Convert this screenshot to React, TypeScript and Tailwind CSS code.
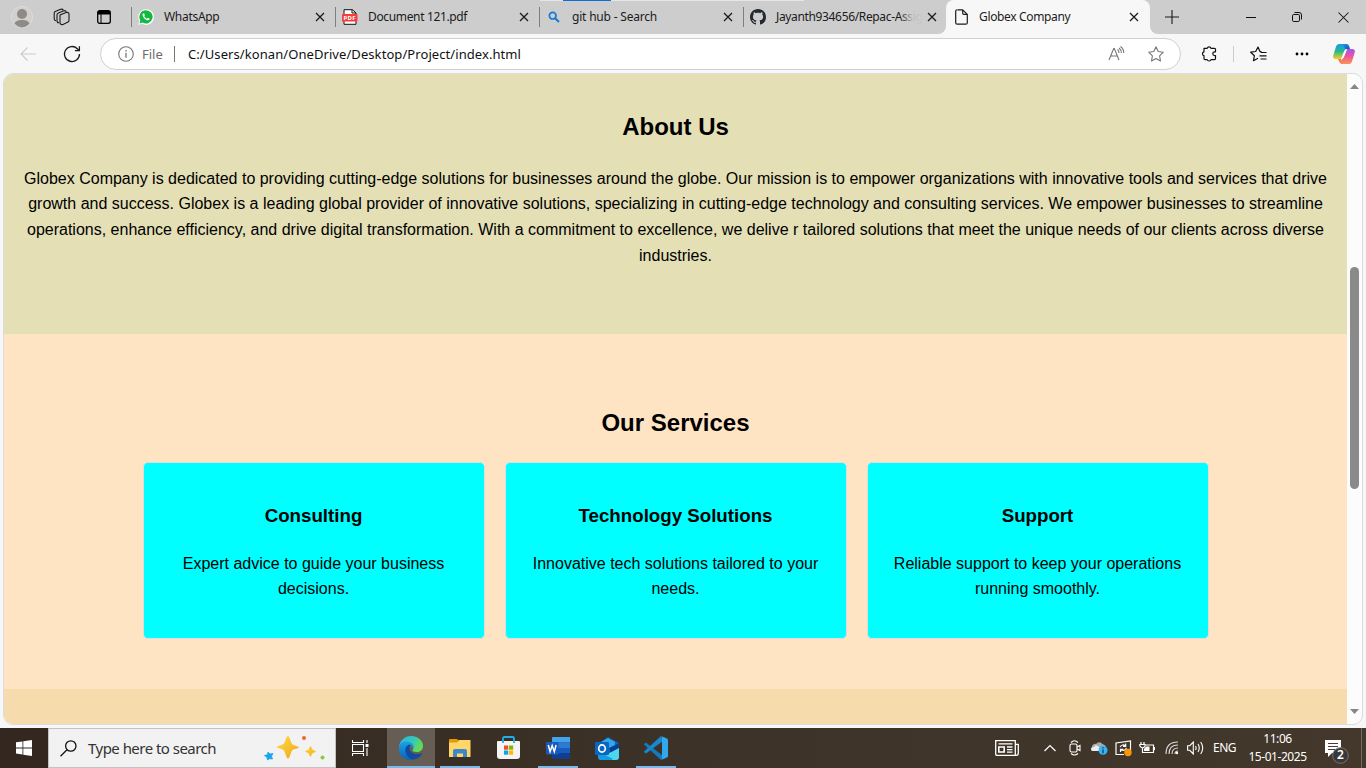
import React from "react";

type TabProps = { title: React.ReactNode; icon: React.ReactNode; active?: boolean; fade?: boolean };

const Close = ({ className = "" }: { className?: string }) => (
  <svg className={"shrink-0 " + className} width="10" height="10" viewBox="0 0 10 10" fill="none" stroke="#1b1b1b" strokeWidth="1.25">
    <path d="M1 1l8 8M9 1L1 9" />
  </svg>
);

function Tab({ title, icon, fade }: TabProps) {
  return (
    <div className="flex h-[34px] w-[204px] shrink-0 items-center">
      <div className="h-5 w-px bg-[#7d7d7d]" />
      <div className="ml-[6px] flex w-4 shrink-0 justify-center">{icon}</div>
      <div className="relative ml-[10px] w-[144px] whitespace-nowrap text-[12px] leading-[18px] text-[#1b1b1b]">
        {title}
        {fade && <div className="absolute inset-y-0 -right-1 w-6 bg-gradient-to-r from-[#cdcdcd00] via-[#cdcdcde0] to-[#cdcdcd]" />}
      </div>
      <Close className="ml-[7px]" />
    </div>
  );
}

const WhatsAppIcon = () => (
  <svg width="16" height="16" viewBox="0 0 16 16">
    <path d="M8 .2a7.800 7.800 0 0 0-6.800 11.500L.2 15.800l4.200-1A7.800 7.800 0 1 0 8 .2z" fill="#fff" />
    <path d="M8 1.300a6.600 6.600 0 0 0-5.700 10l-.8 3.100 3.200-.8A6.600 6.600 0 1 0 8 1.300z" fill="#12b93f" />
    <path d="M5.600 4.300c-.9.4-1.300 1.300-.9 2.500.7 2 2.300 3.700 4.400 4.400 1.200.4 2.300 0 2.500-1.100l-.1-.5-1.600-.8-.9.9C7.600 9.200 6.700 8.200 6.200 7.100l.7-.9-.7-1.800z" fill="#fff" />
  </svg>
);

const PdfIcon = () => (
  <svg width="16" height="16" viewBox="0 0 16 16">
    <path d="M2 .7h8.500L14 4v11.300H2z" fill="#fff" stroke="#111" strokeWidth="1" />
    <path d="M10 .7V4h4" fill="none" stroke="#111" />
    <rect x="0" y="5" width="15.500" height="7.500" rx=".7" fill="#f73d3d" />
    <text x="1.500" y="11" fontSize="6" fontWeight="700" fill="#fff" fontFamily="Open Sans, sans-serif" textLength="12">PDF</text>
  </svg>
);

const SearchIcon = () => (
  <svg width="12" height="12" viewBox="0 0 12 12" fill="none" stroke="#1878d4" strokeWidth="1.700">
    <circle cx="4.700" cy="4.700" r="3.300" />
    <path d="M7.200 7.200l3.800 3.800" strokeWidth="2" />
  </svg>
);

const GitHubIcon = () => (
  <svg width="16" height="16" viewBox="0 0 16 16" fill="#24292f">
    <path d="M8 0C3.580 0 0 3.580 0 8c0 3.540 2.290 6.530 5.470 7.590.4.070.550-.170.550-.380 0-.190-.010-.820-.010-1.490-2.010.370-2.530-.490-2.690-.940-.090-.230-.480-.940-.820-1.130-.280-.150-.680-.520-.010-.530.630-.010 1.080.580 1.230.820.720 1.210 1.870.870 2.330.660.070-.520.280-.870.510-1.070-1.780-.200-3.640-.890-3.640-3.950 0-.870.310-1.590.820-2.150-.080-.200-.360-1.020.080-2.120 0 0 .670-.210 2.200.820.640-.180 1.320-.270 2-.270s1.360.090 2 .270c1.530-1.040 2.200-.820 2.200-.820.440 1.100.160 1.920.080 2.120.510.560.820 1.270.820 2.150 0 3.070-1.870 3.750-3.650 3.950.290.250.540.730.540 1.480 0 1.070-.010 1.930-.010 2.200 0 .210.150.460.550.380A8.010 8.010 0 0 0 16 8c0-4.420-3.580-8-8-8z" />
  </svg>
);

function TabStrip() {
  return (
    <header className="relative flex h-[34px] bg-[#cdcdcd]">
      <div className="absolute left-[540px] top-0 h-px w-[264px] bg-[#e6e6e6]" />
      <div className="absolute left-[563px] top-0 h-px w-[48px] bg-[#0f6fd1]" />
      <div className="flex w-[131px] shrink-0 items-center">
        <svg className="ml-[11px]" width="22" height="22" viewBox="0 0 22 22">
          <circle cx="11" cy="11" r="10.500" fill="#d2cfcc" stroke="#dedcda" />
          <circle cx="11" cy="8" r="5" fill="#8d8a87" />
          <path d="M3.500 17.600C4.800 14.600 7.500 14 11 14s6.200.6 7.500 3.600A10.500 10.500 0 0 1 11 21.500a10.500 10.500 0 0 1-7.500-3.900z" fill="#8d8a87" />
        </svg>
        <svg className="ml-[20px]" width="18" height="18" viewBox="0 0 18 18" fill="none" stroke="#1b1b1b" strokeWidth="1.100" strokeLinejoin="round">
          <path d="M7 7l6-2.500q2.500-.6 3 1.500v6.500q0 1-1 1.500L10 16.500q-2.300.6-3-1.300z" />
          <path d="M6 14.700q-2 0-2-2V6.800q0-1 1-1.600L10 3q2.600-1 3.300.8M3 12.700q-1.800-.2-1.800-2V5.300q0-1.200 1-1.700L7 1.500q2.500-1 3.300.6" />
        </svg>
        <svg className="ml-[26px]" width="14" height="14" viewBox="0 0 14 14">
          <rect x=".7" y=".7" width="12.600" height="12.600" rx="2" fill="none" stroke="#000" strokeWidth="1.300" />
          <path d="M1 1h12v3.500H1z" fill="#000" />
          <path d="M4 4v9" stroke="#000" strokeWidth="1" />
        </svg>
      </div>
      <Tab title={<span className="tracking-[-0.3px]">WhatsApp</span>} icon={<WhatsAppIcon />} />
      <Tab title={<span className="tracking-[-0.350px]">Document 121.pdf</span>} icon={<PdfIcon />} />
      <Tab title={<span className="tracking-[-0.2px]">git hub - Search</span>} icon={<SearchIcon />} />
      <Tab title={<span className="tracking-[-0.350px]">Jayanth934656/Repac-Assig</span>} icon={<GitHubIcon />} fade />
      <div className="relative -ml-px flex h-[34px] w-[204px] shrink-0 items-center rounded-t-lg bg-[#f7f7f7]">
        <div className="absolute -left-2 bottom-0 size-2 overflow-hidden bg-[#f7f7f7]"><div className="size-2 rounded-br-lg bg-[#cdcdcd]" /></div>
        <div className="absolute -right-2 bottom-0 size-2 overflow-hidden bg-[#f7f7f7]"><div className="size-2 rounded-bl-lg bg-[#cdcdcd]" /></div>
        <svg className="ml-[9px]" width="13" height="16" viewBox="0 0 13 16" fill="none" stroke="#1b1b1b" strokeWidth="1.200" strokeLinejoin="round">
          <path d="M2.500.8h5.200L12.300 5.400v8.300q0 1.500-1.500 1.500H2.200Q.7 15.200.7 13.700V2.300Q.7.8 2.200.8M7.700.8v3.500q0 1.100 1.100 1.100h3.500" />
        </svg>
        <span className="ml-[11px] w-[144px] whitespace-nowrap text-[12px] leading-[18px] tracking-[-0.350px] text-[#1b1b1b]">Globex Company</span>
        <Close className="ml-[6px]" />
      </div>
      <div className="flex grow items-center">
        <svg className="ml-[15px]" width="14" height="14" viewBox="0 0 14 14" stroke="#1b1b1b" strokeWidth="1.100"><path d="M7 0v14M0 7h14" /></svg>
        <svg className="ml-[67px]" width="10" height="10" viewBox="0 0 10 10" stroke="#111"><path d="M0 5.500h10" /></svg>
        <svg className="ml-[36px]" width="10" height="10" viewBox="0 0 10 10" fill="none" stroke="#111">
          <rect x=".5" y="2.500" width="7" height="7" rx="1.300" /><path d="M2.500.5H7q2.500 0 2.500 2.500v4.500" />
        </svg>
        <svg className="ml-[36px]" width="11" height="11" viewBox="0 0 11 11" stroke="#111" strokeWidth="1.050"><path d="M.5.5l10 10M10.500.5l-10 10" /></svg>
      </div>
    </header>
  );
}

const Copilot = () => (
  <svg width="22" height="20" viewBox="0 0 22 20">
    <defs>
      <linearGradient id="cpa" x1="0" y1="0" x2="0" y2="1"><stop stopColor="#159be8" /><stop offset=".5" stopColor="#28b98a" /><stop offset="1" stopColor="#f6cf23" /></linearGradient>
      <linearGradient id="cpb" x1="0" y1="0" x2="0" y2="1"><stop stopColor="#a650f2" /><stop offset=".5" stopColor="#ee5797" /><stop offset="1" stopColor="#fb9558" /></linearGradient>
      <linearGradient id="cpc" x1="0" y1="0" x2="1" y2="1"><stop stopColor="#1ba7f2" /><stop offset="1" stopColor="#1a47b8" /></linearGradient>
    </defs>
    <path d="M6 0h7q2 0 1 2L10 13q-.8 2-3 2H3q-3.500 0-2.700-3.500L3 2.500Q3.700 0 6 0z" fill="url(#cpa)" />
    <path d="M6 0h7.500q2 0 2.600 2l1 3.500H14q-1.800 0-2.500-2Q10.500 0 6 0z" fill="url(#cpc)" />
    <path d="M16 20H9q-2 0-1-2L12 7q.8-2 3-2h4q3.500 0 2.700 3.500L19 17.500Q18.300 20 16 20z" fill="url(#cpb)" />
    <path d="M5 15h3q1.500 0 .7-2l-.2 5q-.2 2 1.500 2-3 0-4-3z" fill="#fb773c" />
    <path d="M13.500 5.500q-1.300 0-2 2L8.500 15q1.300-.2 2-2z" fill="#fff" stroke="#fff" strokeWidth="1" strokeLinejoin="round" />
  </svg>
);

function Toolbar() {
  return (
    <div className="flex h-[39px] items-center bg-[#f7f7f7]">
      <svg className="ml-5 shrink-0" width="16" height="16" viewBox="0 0 16 16" fill="none" stroke="#cbcbcb" strokeWidth="1.100"><path d="M7.500 1.500L1 8l6.500 6.500M1 8h15" /></svg>
      <svg className="ml-[27px] shrink-0" width="18" height="18" viewBox="0 0 18 18" fill="none" stroke="#1b1b1b" strokeWidth="1.300"><path d="M16.500 9A7.500 7.500 0 1 1 14.300 3.700L16.200 5.600M16.400 1.200v4.500h-4.500" /></svg>
      <div className="ml-[19px] mt-px flex h-[32px] w-[1081px] shrink-0 items-center rounded-full border border-[#d0d0d4] bg-white">
        <svg className="ml-[17px]" width="16" height="16" viewBox="0 0 16 16" fill="none" stroke="#767676" strokeWidth="1.100"><circle cx="8" cy="8" r="7.300" /><path d="M8 6.700v5M8 4v1.400" strokeWidth="1.300" /></svg>
        <span className="ml-2 w-[22px] text-[13px] leading-5 text-[#6b6b6b]">File</span>
        <div className="ml-[10px] h-4 w-px bg-[#767676]" />
        <span className="ml-[13px] grow whitespace-nowrap text-[13px] leading-5 tracking-[0.075px] text-[#111]">C:/Users/konan/OneDrive/Desktop/Project/index.html</span>
        <svg className="mr-[23px]" width="17" height="16" viewBox="0 0 17 16" fill="none" stroke="#767676" strokeWidth="1.100"><path d="M1 14L5.700 2.500h.6L11 14M2.700 10h6.600M9.500 3.500q1.600 1.300 1.500 3.500M11 2q2.500 2 2.300 5M12.500.5Q16 3.200 15.700 7" /></svg>
        <svg className="mr-4" width="16" height="16" viewBox="0 0 16 16" fill="none" stroke="#767676" strokeWidth="1.100" strokeLinejoin="round"><path d="M8 .8l2.200 4.700 5.100.7-3.700 3.600.9 5.200L8 12.500 3.500 15l.9-5.200L.7 6.200l5.100-.7z" /></svg>
      </div>
      <svg className="ml-[20px] shrink-0" width="17" height="17" viewBox="0 0 17 17" fill="none" stroke="#111" strokeWidth="1.200" strokeLinejoin="round"><path d="M3 3.300h3.200a2 2 0 0 1 3.800 0h3.500q1 0 1 1v2.500h-.8a1.900 1.900 0 0 0 0 3.800h.8v3q0 1-1 1H10a2 2 0 0 1-3.800 0H4q-1 0-1-1V10.700a2 2 0 0 1 0-3.900z" /></svg>
      <div className="ml-[15px] h-4 w-px bg-[#cbcbcb]" />
      <svg className="ml-4 shrink-0" width="17" height="16" viewBox="0 0 17 16" fill="none" stroke="#111" strokeWidth="1.200" strokeLinejoin="round"><path d="M11.500 5.500l-1.700-.2L8 1 5.700 5.500.7 6.200l3.700 3.500-.9 5L8 12.300M10.500 6.500h6M9.500 9.800h7M10.500 13h6" /></svg>
      <svg className="ml-[28px] shrink-0" width="14" height="4" viewBox="0 0 14 4"><circle cx="2" cy="2" r="1.400" /><circle cx="7" cy="2" r="1.400" /><circle cx="12" cy="2" r="1.400" /></svg>
      <div className="ml-6 shrink-0"><Copilot /></div>
    </div>
  );
}

const services = [
  { name: "Consulting", text: "Expert advice to guide your business decisions." },
  { name: "Technology Solutions", text: "Innovative tech solutions tailored to your needs." },
  { name: "Support", text: "Reliable support to keep your operations running smoothly." },
];

function Page() {
  return (
    <div className="flex h-[655px] bg-[#f7f7f7] px-[3px] pb-[3px]">
      <div className="flex h-[652px] w-[1360px] overflow-hidden rounded-[10px] border border-[#dcdce0] bg-[#fcfcfc]">
        <main className="w-[1343px] shrink-0 text-center font-['Liberation_Sans',Arial,sans-serif] text-[16px] leading-[25.6px] text-black">
          <section className="h-[260px] bg-[#e4dfb5] px-5 pt-[33.700px]">
            <h2 className="text-[24px] font-bold leading-[38.4px]">About Us</h2>
            <p className="mt-[19.750px]">
              Globex Company is dedicated to providing cutting-edge solutions for businesses around the globe. Our mission is to empower organizations with innovative tools and services that drive growth and success. Globex is a leading global provider of innovative solutions, specializing in cutting-edge technology and consulting services. We empower businesses to streamline operations, enhance efficiency, and drive digital transformation. With a commitment to excellence, we delive r tailored solutions that meet the unique needs of our clients across diverse industries.
            </p>
          </section>
          <section className="h-[355px] bg-[#ffe4c4] pt-[69.900px]">
            <h2 className="text-[24px] font-bold leading-[38.4px]">Our Services</h2>
            <div className="mt-[19.900px] flex justify-center gap-5">
              {services.map((s) => (
                <article key={s.name} className="h-[176.600px] w-[342px] rounded-[5px] border border-[#dddddd] bg-[#00ffff] px-5 pt-[38.200px]">
                  <h3 className="text-[18.720px] font-bold leading-[29.950px]">{s.name}</h3>
                  <p className="mt-[19.200px]">{s.text}</p>
                </article>
              ))}
            </div>
          </section>
          <section className="h-9 bg-[#f6dcac]" />
        </main>
        <aside className="flex w-[15px] flex-col items-center">
          <svg className="mt-[10px]" width="9" height="5" viewBox="0 0 9 5"><path d="M0 5L4.500 0 9 5z" fill="#868686" /></svg>
          <div className="mt-[178px] h-[222px] w-[9px] rounded-full bg-[#8a8a8a]" />
          <svg className="mt-[220px]" width="9" height="5" viewBox="0 0 9 5"><path d="M0 0l4.500 5L9 0z" fill="#868686" /></svg>
        </aside>
      </div>
    </div>
  );
}

const EdgeIcon = () => (
  <svg width="24" height="24" viewBox="0 0 24 24">
    <defs>
      <linearGradient id="ea" x1="0" y1="0" x2="1" y2=".4"><stop stopColor="#2ab4ea" /><stop offset=".6" stopColor="#34c8b8" /><stop offset="1" stopColor="#62dc57" /></linearGradient>
      <linearGradient id="eb" x1="0" y1="0" x2="0" y2="1"><stop stopColor="#1ba2e6" /><stop offset="1" stopColor="#0b62bd" /></linearGradient>
    </defs>
    <path d="M0 11C1 4 6 0 12 0c7 0 12 4.500 12 10 0 4-3 6-6.500 6-3 0-4.500-1-4-2 1.800-2 .8-5.800-3.500-6.300C5 7 1.500 8 0 11z" fill="url(#ea)" />
    <path d="M0 11c1-4.500 5-6 9.500-5.300 4 .6 5.500 3.300 5 5.800-3.500-1.500-6.500.5-6.500 4 0 4 3.500 7.500 7 8C6 25.500-.8 19.500 0 11z" fill="url(#eb)" />
    <path d="M10 8.500C6.500 10 5.500 14 7 17.500c1.500 3.800 4.700 6 7.700 6 3.500-.5 6.600-2.700 8.300-5.800.2-.5-.2-.8-.7-.5C16.500 19.700 10.500 16.500 10.500 12.500c0-1.500.8-2.500 1.800-3.200z" fill="#104b9d" />
  </svg>
);

const FolderIcon = () => (
  <svg width="22" height="18" viewBox="0 0 22 18">
    <path d="M0 1q0-1 1-1h7l2 2h11v4H0z" fill="#e39a07" />
    <path d="M0 3.500h8l2-2.500h11.500V18H0z" fill="#ffd667" />
    <path d="M4 18v-6q0-2 2-2h10q2 0 2 2v6h-4v-3.500H8V18z" fill="#3a88cd" />
  </svg>
);

const StoreIcon = () => (
  <svg width="24" height="24" viewBox="0 0 24 24">
    <path d="M6 7V2.500Q6 1 7.500 1h8Q17 1 17 2.500V7" fill="none" stroke="#22b1e6" strokeWidth="1.800" />
    <path d="M0 6q0-1 1-1h21q1 0 1 1v14q0 3-3 3H3q-3 0-3-3z" fill="#f4f4f4" />
    <path d="M6 5v2M17 5v2" stroke="#22b1e6" strokeWidth="1.800" />
    <path d="M7 9.500h4.200v4.200H7z" fill="#f04e24" /><path d="M12 9.500h4.200v4.200H12z" fill="#7fba00" /><path d="M7 14.500h4.200v4.200H7z" fill="#08a4ef" /><path d="M12 14.500h4.200v4.200H12z" fill="#ffb901" />
  </svg>
);

const WordIcon = () => (
  <svg width="24" height="22" viewBox="0 0 24 22">
    <path d="M6 1q0-1 1-1h17v5.500H6z" fill="#41a5ee" /><path d="M6 5.500h18V11H6z" fill="#2b7cd3" /><path d="M6 11h18v5H6z" fill="#185abd" /><path d="M6 16h18v5q0 1-1 1H7q-1 0-1-1z" fill="#103f91" />
    <rect y="5" width="12.500" height="12.500" rx="1" fill="#185abd" />
    <path d="M2.300 8l1.800 6.700L6.200 8.500l2.100 6.200L10.100 8" fill="none" stroke="#fff" strokeWidth="1.500" />
  </svg>
);

const OutlookIcon = () => (
  <svg width="25" height="23" viewBox="0 0 25 23">
    <path d="M3 7L13 0l11 6v14q0 3-3 3H6q-3 0-3-3z" fill="#1066b8" />
    <path d="M6 5l7-4 7 4v9H6z" fill="#31a8ec" /><path d="M14 11l10-5v6l-9 4z" fill="#063f91" />
    <path d="M5 21l19-10v9q0 3-3 3H7q-2 0-2-2z" fill="#4dd8ed" /><path d="M3 14l15 8q-1 1-3 1H6q-3 0-3-3z" fill="#139ce1" />
    <rect y="5" width="14" height="13" rx="1" fill="#0867c2" /><ellipse cx="7" cy="11.500" rx="3.300" ry="3.600" fill="none" stroke="#fff" strokeWidth="1.700" />
  </svg>
);

const CodeIcon = () => (
  <svg width="24" height="24" viewBox="0 0 24 24">
    <path d="M0 8l2-1.500L19 20l-2 4L0 8.600z" fill="#107bc1" />
    <path d="M0 16l2 1.600L19 5l-2-5L0 15.400z" fill="#1787ce" />
    <path d="M17 0l6 2.500q1 .5 1 1.500v16q0 1-1 1.500L17 24q1-.5 1-2V2q0-1.500-1-2z" fill="#31a8ed" />
  </svg>
);

type AppProps = { icon: React.ReactNode; state?: "active" | "open" };
function TaskApp({ icon, state }: AppProps) {
  return (
    <div className={"relative flex h-10 w-12 shrink-0 items-center justify-center " + (state === "active" ? "bg-[#665d55]" : "")}>
      {icon}
      {state && <div className={"absolute bottom-0 h-[2px] bg-[#76b9ed] " + (state === "active" ? "w-12" : "w-10")} />}
    </div>
  );
}

function Taskbar() {
  return (
    <footer className="flex h-10 bg-gradient-to-r from-[#33271f] via-[#3d3228] to-[#43382b] text-white">
      <div className="flex w-12 shrink-0 items-center justify-center">
        <svg width="16" height="16" viewBox="0 0 16 16" fill="#fff"><path d="M0 2.300l6.500-.9v6.100H0zM7.300 1.300L16 0v7.500H7.300zM0 8.400h6.500v6.100L0 13.600zM7.300 8.400H16V16l-8.700-1.300z" /></svg>
      </div>
      <div className="flex w-[288px] shrink-0 items-center border border-[#c4c2c0] bg-[#f2f2f2]">
        <svg className="ml-[11px]" width="17" height="17" viewBox="0 0 17 17" fill="none" stroke="#111" strokeWidth="1.300"><circle cx="10.800" cy="6" r="5.200" /><path d="M7 9.800L.5 16.300" /></svg>
        <span className="ml-[11px] w-[176px] whitespace-nowrap text-[15px] leading-5 tracking-[-0.530px] text-[#333]">Type here to search</span>
        <svg width="62" height="26" viewBox="0 0 62 26">
          <defs><linearGradient id="star" x1="0" y1="0" x2="1" y2="1"><stop stopColor="#ffdc45" /><stop offset="1" stopColor="#f0a51a" /></linearGradient></defs>
          <path d="M24 1q1 0 1.500 2l2 5q.5 1.500 2 2l4.500 1.700q2 .8 0 1.600L29.500 14.500q-1.500.5-2 2l-2 5.500q-1.500 3-3 0l-2-5.500q-.5-1.500-2-2L14 12.800q-3-.8 0-1.600l4.500-1.700q1.500-.5 2-2l2-5Q23 1 24 1z" fill="url(#star)" />
          <path d="M46.500 11.500l1.500 3.500 3.500 1.500-3.500 1.500-1.500 3.500-1.500-3.500-3.500-1.500 3.500-1.500z" fill="url(#star)" stroke="#fac42a" strokeLinejoin="round" />
          <path d="M4 17l2 2 3-.5-1.500 2.800 1 2.700-3-.3-2 1.300-.5-2.500L.5 20.500l3-.8z" fill="#1aa5ea" stroke="#1aa5ea" strokeWidth=".8" strokeLinejoin="round" />
          <circle cx="40" cy="3" r="2" fill="#f26529" /><circle cx="58.500" cy="22.500" r="2" fill="#8dc63f" />
        </svg>
      </div>
      <div className="flex w-[51px] shrink-0 items-center pl-[16px]">
        <svg width="17" height="16" viewBox="0 0 17 16" fill="none" stroke="#fff" strokeWidth="1.100"><path d="M.5 0v2.500h11V0M.5 16v-2.500h11V16M.5 4.500h11v7H.500zM15 0v3M15 8v8" /><path d="M13.500 4h3v3h-3z" fill="#fff" stroke="none" /></svg>
      </div>
      <TaskApp state="active" icon={<EdgeIcon />} />
      <div className="w-px" />
      <TaskApp state="open" icon={<FolderIcon />} />
      <div className="w-px" />
      <TaskApp icon={<StoreIcon />} />
      <div className="w-px" />
      <TaskApp state="open" icon={<WordIcon />} />
      <div className="w-px" />
      <TaskApp icon={<OutlookIcon />} />
      <div className="w-px" />
      <TaskApp state="open" icon={<CodeIcon />} />
      <div className="flex grow items-center justify-end">
        <svg width="24" height="16" viewBox="0 0 24 16" fill="none" stroke="#fff" strokeWidth="1.300"><path d="M.7.7h19.600v14.600H2q-1.300 0-1.300-1.300zM20.300 4.300h3V13q0 2.300-2 2.300h-1M3.500 3.800h14M12 7h5.500M12 9.600h5.500M12 12.200h5.500" /><path d="M3.800 7h5.400v5H3.800z" strokeWidth="1.600" /></svg>
        <svg className="ml-[25px]" width="12" height="8" viewBox="0 0 12 8" fill="none" stroke="#fff" strokeWidth="1.200"><path d="M.5 7L6 1.500 11.500 7" /></svg>
        <svg className="ml-[13px]" width="12" height="16" viewBox="0 0 12 16" fill="none" stroke="#fff" strokeWidth="1.100"><rect x="1" y="4" width="7" height="8" rx="1.500" /><path d="M8 7l3-1.500v5L8 9M2 2.500Q5.500-1 9 2.500M2 13.500q3.500 3 7 0" /></svg>
        <svg className="ml-[10px]" width="17" height="14" viewBox="0 0 17 14"><path d="M1 6a3 3 0 0 1 4-3 4 4 0 0 1 6.500 0Q15 4 15 7q0 3-3 3H3Q0 10 0 8q0-1.500 1-2z" fill="#a9aaaa" /><path d="M0 8q.5-2 3-2l2-2 8 5-2 1H2Q0 10 0 8z" fill="#eee" /><circle cx="12" cy="9.300" r="4.500" fill="#36b4f3" /><path d="M12 8.500v3.700M12 6.200v1.300" stroke="#124661" strokeWidth="1.400" /></svg>
        <svg className="ml-[7px]" width="17" height="17" viewBox="0 0 17 17" fill="none" stroke="#fff" strokeWidth="1.200"><path d="M9 14.500H1V3l14.500-2v9" /><path d="M5 7q2.500-3.500 5.500-1M10.700 3.500v2.800H8M11.500 8Q9 12 6 9.500M5.500 12V9.300h2.800" /><circle cx="13" cy="12.500" r="3.700" fill="#fa960b" stroke="none" /></svg>
        <svg className="ml-[7px]" width="16" height="12" viewBox="0 0 16 12" fill="none" stroke="#fff" strokeWidth="1.200"><path d="M7 3h7.500v7.500h-11V7M15.500 5v3M2 0v2M5 0v2M.8 2.500h5.400v1q0 1.500-2.700 2.500Q.8 5 .8 3.500zM3.500 5.500v2" /><path d="M7 4.500h3.500V9H5V7z" fill="#fff" stroke="none" /></svg>
        <svg className="ml-[10px]" width="14" height="14" viewBox="0 0 14 14" fill="none" stroke="#ddd" strokeWidth="1.100"><path d="M1 13Q1 1 13 1M4 13q0-9 9-9M7 13q0-6 6-6M10 13q0-3 3-3" /><circle cx="12" cy="12" r="1.200" fill="#fff" stroke="none" /></svg>
        <svg className="ml-[8px]" width="18" height="14" viewBox="0 0 18 14" fill="none" stroke="#fff" strokeWidth="1.100"><path d="M.6 4.700h2.200L6.300 1v12L2.800 9.300H.6zM8.500 5q1.200 2 0 4M11 3q2.500 4 0 8M13.700 1q4 6 0 12" /></svg>
        <span className="ml-[8px] w-[24px] whitespace-nowrap text-[12px] leading-4 tracking-[-0.5px]">ENG</span>
        <div className="ml-[5px] flex w-[71px] flex-col items-center whitespace-nowrap text-[12px] leading-[18px] tracking-[-0.450px]"><span>11:06</span><span>15-01-2025</span></div>
        <div className="relative ml-[8px] h-10 w-[35px]">
          <svg className="ml-[4px] mt-[12px]" width="26" height="24" viewBox="0 0 26 24"><path d="M0 0h16v13H7l-4 4v-4H0z" fill="#fff" /><path d="M3 3.500h10M3 6.500h10M3 9.500h7" stroke="#4a3c31" /><circle cx="15.500" cy="15.500" r="7.800" fill="#373839" stroke="#777572" /></svg>
          <span className="absolute left-[16px] top-[19px] text-[12px] font-semibold leading-4">2</span>
        </div>
        <div className="ml-[5px] h-10 w-px bg-[#756d65]" /><div className="w-1" />
      </div>
    </footer>
  );
}

export default function App() {
  return (
    <div className="flex h-[768px] w-[1366px] flex-col overflow-hidden bg-[#f7f7f7] font-['Noto_Sans','Open_Sans',sans-serif]">
      <TabStrip />
      <Toolbar />
      <Page />
      <Taskbar />
    </div>
  );
}
